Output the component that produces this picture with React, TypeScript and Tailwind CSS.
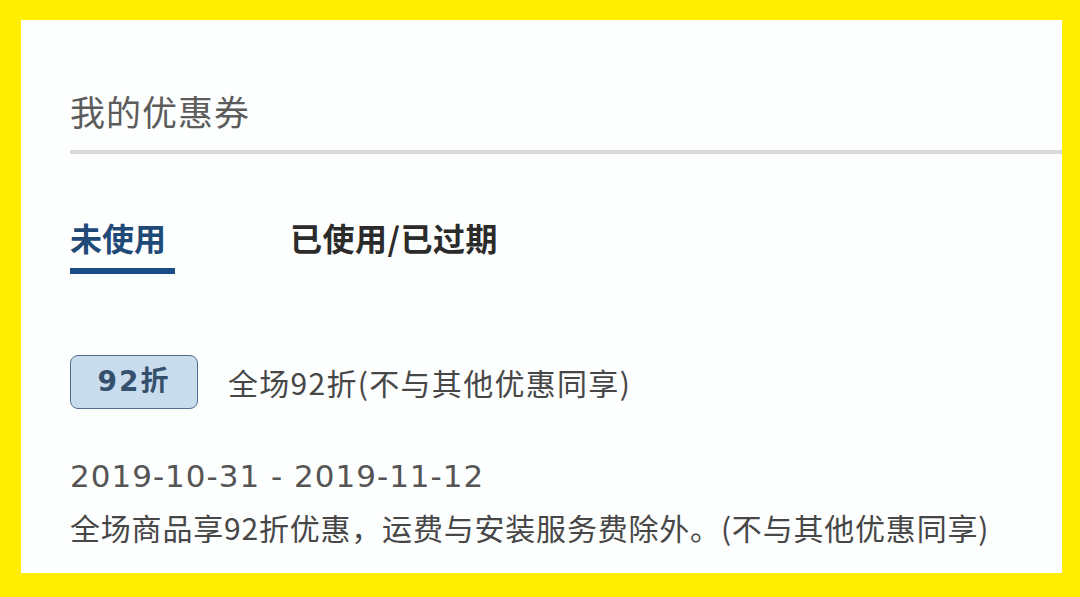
import React from 'react';

const font = { fontFamily: '"Noto Sans CJK SC", "Noto Sans", sans-serif' };
const latin = { fontFamily: '"DejaVu Sans", "Noto Sans CJK SC", sans-serif' };

export default function App() {
  return (
    <div className="w-[1080px] h-[597px] bg-[#ffee00] pt-[20px] pl-[21px] pr-[18px] pb-[24px]" style={font}>
      <div className="h-full bg-[#fdfefe] flex flex-col pl-[49px] pt-[71px]">
        {/* 标题 */}
        <div className="text-[35px] leading-[40px] text-[#5c5c5c] tracking-[1px]">我的优惠券</div>
        <div className="mt-[19px] h-[4px] bg-[#dadada]"></div>

        {/* 选项卡 */}
        <div className="mt-[63px] flex items-start">
          <div className="flex flex-col">
            <span className="text-[32px] leading-[40px] font-bold text-[#1f4a78]">未使用</span>
            <div className="mt-[11px] w-[105px] h-[6px] bg-[#1b4c86]"></div>
          </div>
          <span className="ml-[115px] text-[32px] leading-[40px] font-bold text-[#2b2b2b] tracking-[0.5px]">已使用/已过期</span>
        </div>

        {/* 优惠券 */}
        <div className="mt-[81px] flex items-center">
          <div
            className="w-[128px] h-[54px] rounded-[8px] border-[1.5px] border-[#51708f] bg-[#c9dcee] flex items-center justify-center text-[28px] font-bold text-[#34506c] tracking-[2px]"
            style={latin}
          >
            92折
          </div>
          <span className="ml-[30px] text-[30px] text-[#474747] tracking-[1.3px]">全场92折(不与其他优惠同享)</span>
        </div>

        <div className="mt-[49px] text-[31px] leading-[36px] text-[#555555] tracking-[1px]" style={latin}>
          2019-10-31 - 2019-11-12
        </div>
        <div className="mt-[15px] text-[30px] leading-[36px] text-[#474747] tracking-[0.8px] whitespace-nowrap">
          全场商品享92折优惠，运费与安装服务费除外。(不与其他优惠同享)
        </div>
      </div>
    </div>
  );
}
